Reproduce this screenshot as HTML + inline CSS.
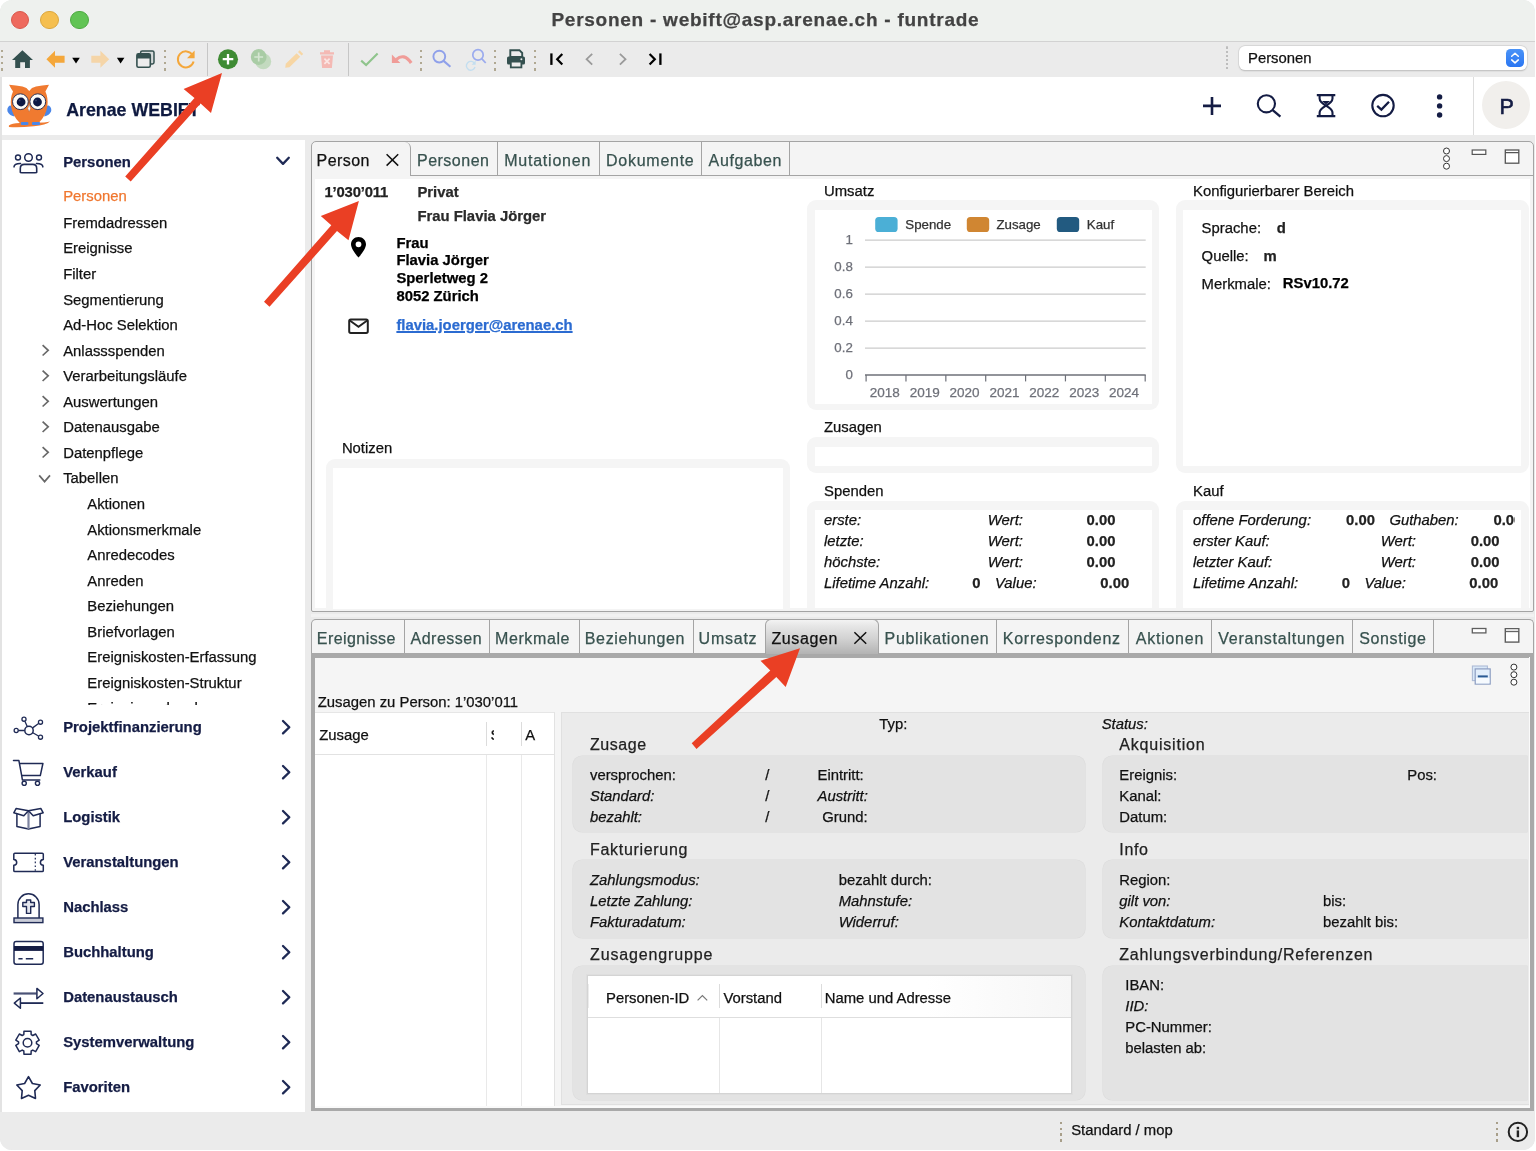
<!DOCTYPE html>
<html><head><meta charset="utf-8"><title>Personen</title><style>
html,body{margin:0;padding:0;background:#fff;}
body{width:1536px;height:1151px;overflow:hidden;position:relative;font-family:"Liberation Sans",sans-serif;color:#111;}
#win{will-change:transform;position:absolute;left:0;top:0;width:1534.8px;height:1150.2px;border-radius:12px;overflow:hidden;background:#ebebeb;}
.b{position:absolute;box-sizing:border-box;}
.t{position:absolute;line-height:1;white-space:nowrap;-webkit-text-stroke:0.25px currentColor;}
</style></head><body><div id="win">
<div class="b" style="left:0px;top:0px;width:1536px;height:41px;background:#eef1ee;"></div>
<div class="b" style="left:0px;top:41px;width:1536px;height:1px;background:#d2d2d2;"></div>
<div class="b" style="left:10.5px;top:10.8px;width:18.4px;height:18.4px;background:#ee6a5e;border-radius:50%;border:0.5px solid #d9584c;"></div>
<div class="b" style="left:40.3px;top:10.8px;width:18.4px;height:18.4px;background:#f5bf4f;border-radius:50%;border:0.5px solid #dba73e;"></div>
<div class="b" style="left:70.2px;top:10.8px;width:18.4px;height:18.4px;background:#61c454;border-radius:50%;border:0.5px solid #4faa43;"></div>
<div class="t" style="top:10.00px;font-size:19px;left:551.40px;font-weight:700;color:#434343;letter-spacing:0.75px;">Personen - webift@asp.arenae.ch - funtrade</div>
<div class="b" style="left:0px;top:42px;width:1536px;height:35px;background:#ebebeb;"></div>
<div class="b" style="left:0px;top:77px;width:1536px;height:57.5px;background:#ffffff;"></div>
<div class="b" style="left:0px;top:134.5px;width:1536px;height:1016.5px;background:#ebebeb;"></div>
<div class="b" style="left:0px;top:77px;width:1.6px;height:1035px;background:#e3e3e3;"></div>
<div class="b" style="left:1060px;top:1121.6px;width:2.2px;height:2.4px;background:#a89f8a;"></div>
<div class="b" style="left:1495.8px;top:1121.6px;width:2.2px;height:2.4px;background:#a89f8a;"></div>
<div class="b" style="left:1060px;top:1127.53px;width:2.2px;height:2.4px;background:#a89f8a;"></div>
<div class="b" style="left:1495.8px;top:1127.53px;width:2.2px;height:2.4px;background:#a89f8a;"></div>
<div class="b" style="left:1060px;top:1133.4599999999998px;width:2.2px;height:2.4px;background:#a89f8a;"></div>
<div class="b" style="left:1495.8px;top:1133.4599999999998px;width:2.2px;height:2.4px;background:#a89f8a;"></div>
<div class="b" style="left:1060px;top:1139.3899999999999px;width:2.2px;height:2.4px;background:#a89f8a;"></div>
<div class="b" style="left:1495.8px;top:1139.3899999999999px;width:2.2px;height:2.4px;background:#a89f8a;"></div>
<div class="t" style="top:1123.00px;font-size:14.85px;left:1071.20px;">Standard / mop</div>
<svg class="b" style="left:1506px;top:1119.5px;" width="24" height="24" viewBox="0 0 24 24"><circle cx="11.9" cy="11.9" r="9.2" fill="none" stroke="#222" stroke-width="2"/><rect x="10.7" y="10.4" width="2.4" height="6.8" fill="#222"/><rect x="10.7" y="6.8" width="2.4" height="2.4" fill="#222"/></svg>
<div class="b" style="left:1.4px;top:49.8px;width:2px;height:2.3px;background:#b0a892;"></div>
<div class="b" style="left:1.4px;top:55.949999999999996px;width:2px;height:2.3px;background:#b0a892;"></div>
<div class="b" style="left:1.4px;top:62.099999999999994px;width:2px;height:2.3px;background:#b0a892;"></div>
<div class="b" style="left:1.4px;top:68.25px;width:2px;height:2.3px;background:#b0a892;"></div>
<div class="b" style="left:164px;top:49.8px;width:2px;height:2.3px;background:#b0a892;"></div>
<div class="b" style="left:164px;top:55.949999999999996px;width:2px;height:2.3px;background:#b0a892;"></div>
<div class="b" style="left:164px;top:62.099999999999994px;width:2px;height:2.3px;background:#b0a892;"></div>
<div class="b" style="left:164px;top:68.25px;width:2px;height:2.3px;background:#b0a892;"></div>
<div class="b" style="left:420.4px;top:49.8px;width:2px;height:2.3px;background:#b0a892;"></div>
<div class="b" style="left:420.4px;top:55.949999999999996px;width:2px;height:2.3px;background:#b0a892;"></div>
<div class="b" style="left:420.4px;top:62.099999999999994px;width:2px;height:2.3px;background:#b0a892;"></div>
<div class="b" style="left:420.4px;top:68.25px;width:2px;height:2.3px;background:#b0a892;"></div>
<div class="b" style="left:494px;top:49.8px;width:2px;height:2.3px;background:#b0a892;"></div>
<div class="b" style="left:494px;top:55.949999999999996px;width:2px;height:2.3px;background:#b0a892;"></div>
<div class="b" style="left:494px;top:62.099999999999994px;width:2px;height:2.3px;background:#b0a892;"></div>
<div class="b" style="left:494px;top:68.25px;width:2px;height:2.3px;background:#b0a892;"></div>
<div class="b" style="left:534.4px;top:49.8px;width:2px;height:2.3px;background:#b0a892;"></div>
<div class="b" style="left:534.4px;top:55.949999999999996px;width:2px;height:2.3px;background:#b0a892;"></div>
<div class="b" style="left:534.4px;top:62.099999999999994px;width:2px;height:2.3px;background:#b0a892;"></div>
<div class="b" style="left:534.4px;top:68.25px;width:2px;height:2.3px;background:#b0a892;"></div>
<div class="b" style="left:1226px;top:46px;width:2px;height:2px;background:#c9c9c9;"></div>
<div class="b" style="left:1226.3px;top:46.5px;width:1.6px;height:2px;background:#bdbdbd;"></div>
<div class="b" style="left:1226.3px;top:50.6px;width:1.6px;height:2px;background:#bdbdbd;"></div>
<div class="b" style="left:1226.3px;top:54.7px;width:1.6px;height:2px;background:#bdbdbd;"></div>
<div class="b" style="left:1226.3px;top:58.8px;width:1.6px;height:2px;background:#bdbdbd;"></div>
<div class="b" style="left:1226.3px;top:62.9px;width:1.6px;height:2px;background:#bdbdbd;"></div>
<div class="b" style="left:1226.3px;top:67.0px;width:1.6px;height:2px;background:#bdbdbd;"></div>
<div class="b" style="left:207.2px;top:43px;width:1px;height:33px;background:#c6c6c6;"></div>
<div class="b" style="left:348px;top:43px;width:1px;height:33px;background:#c6c6c6;"></div>
<svg class="b" style="left:0px;top:0px;" width="700" height="80" viewBox="0 0 700 80"><path d="M22.4 50.2 L33 59.9 L29.9 59.9 L29.9 68 L25 68 L25 62.2 L20.2 62.2 L20.2 68 L15.2 68 L15.2 59.9 L12 59.9 Z" fill="#34504f"/><path d="M46.4 59.2 L55 50.7 L55 55.8 L64.6 55.8 L64.6 62.7 L55 62.7 L55 67.7 Z" fill="#f4a73b"/><path d="M72.2 57.8 L79.8 57.8 L76 63.4 Z" fill="#000"/><path d="M109.2 59.2 L100.4 50.7 L100.4 55.8 L91.3 55.8 L91.3 62.7 L100.4 62.7 L100.4 67.7 Z" fill="#f5d5a8"/><path d="M116.9 57.8 L124.4 57.8 L120.6 63.4 Z" fill="#000"/><rect x="140.6" y="50.9" width="13.4" height="13" rx="1.6" fill="#d5dada" stroke="#34504f" stroke-width="1.5"/><rect x="136.9" y="53.9" width="13.4" height="13.4" rx="1.6" fill="#ececec" stroke="#34504f" stroke-width="1.6"/><rect x="136.9" y="53.9" width="13.4" height="4.6" fill="#34504f"/><path d="M192.6 55 A8 8 0 1 0 193.6 61.5" fill="none" stroke="#f4a73b" stroke-width="2"/><path d="M194.6 50.4 L194.6 58.2 L187 58.2 Z" fill="#f4a73b"/><circle cx="228" cy="59.2" r="10" fill="#3f8b34"/><path d="M228 53.9 V64.5 M222.7 59.2 H233.3" stroke="#fff" stroke-width="2.3"/><circle cx="263.3" cy="61.4" r="7.9" fill="#c3dabf"/><circle cx="258.7" cy="57" r="7.9" fill="#a9cca5"/><path d="M258.7 52.6 V61.4 M254.3 57 H263.1" stroke="#d5e6d2" stroke-width="1.7"/><path d="M285.2 67.8 L285.8 63.7 L296.6 53.2 L300.2 56.8 L289.4 67.3 Z" fill="#f7d6a4"/><path d="M298 51.9 L299.6 50.3 L303.2 53.9 L301.6 55.5 Z" fill="#f7d6a4"/><path d="M320 52.2 H334 V54.4 H320 Z M324 50.2 H330 V52.2 H324 Z M321 55.6 H333 L331.9 68 H322.1 Z" fill="#f4b9b4"/><path d="M324.4 58.6 L329.6 63.8 M329.6 58.6 L324.4 63.8" stroke="#fbe6e4" stroke-width="1.7"/><path d="M361.2 60.6 L366.1 65 L377.6 53.4" fill="none" stroke="#8fc48c" stroke-width="2.1"/><path d="M391.9 54.4 L391.9 63 L400.4 63 Z" fill="#f09c98"/><path d="M396.2 59.6 Q404 52.5 411.2 63" fill="none" stroke="#f09c98" stroke-width="3.2"/><circle cx="439.3" cy="56.6" r="5.9" fill="none" stroke="#8fa0ea" stroke-width="1.9"/><path d="M443.6 60.9 L450.4 66.8" stroke="#8fa0ea" stroke-width="2.1"/><circle cx="478" cy="54.9" r="5.2" fill="none" stroke="#9babee" stroke-width="1.7"/><path d="M481.7 58.7 L485.7 63" stroke="#9babee" stroke-width="1.8"/><path d="M474.6 63.6 A4.4 4.4 0 1 0 475 67" fill="none" stroke="#c3def0" stroke-width="1.4"/><path d="M475.6 60.6 L475.6 64.8 L471.6 64.8 Z" fill="#c3def0"/><path d="M510.3 50.2 H519.4 L522.2 53 V57 H510.3 Z" fill="none" stroke="#34504f" stroke-width="1.9"/><rect x="507" y="56.6" width="18" height="8" rx="1.6" fill="#34504f"/><rect x="510.8" y="61.6" width="10.6" height="5.8" fill="#ececec" stroke="#34504f" stroke-width="1.8"/><circle cx="521.4" cy="59.2" r="1" fill="#ececec"/><path d="M551.4 53.4 V64.9" stroke="#000" stroke-width="2.3"/><path d="M562.3 53.9 L557.2 59.2 L562.3 64.5" fill="none" stroke="#000" stroke-width="2.2"/><path d="M592.2 53.8 L586.6 59.2 L592.2 64.6" fill="none" stroke="#9a9a9a" stroke-width="1.8"/><path d="M619.9 53.8 L625.5 59.2 L619.9 64.6" fill="none" stroke="#9a9a9a" stroke-width="1.8"/><path d="M649.6 53.9 L654.8 59.2 L649.6 64.5" fill="none" stroke="#000" stroke-width="2.2"/><path d="M660.4 53.4 V64.9" stroke="#000" stroke-width="2.3"/></svg>
<div class="b" style="left:1239px;top:45.7px;width:288px;height:24.5px;background:#ffffff;border-radius:6px;box-shadow:0 0 0 0.5px #cfcfcf,0 0.5px 1.5px rgba(0,0,0,0.25);"></div>
<div class="t" style="top:51.00px;font-size:14.85px;left:1248.00px;">Personen</div>
<div class="b" style="left:1506px;top:48.7px;width:18px;height:18.2px;border-radius:4.6px;background:linear-gradient(#4a93f7,#2b76f2);"></div>
<svg class="b" style="left:1506px;top:48.7px;" width="18" height="18.2" viewBox="0 0 18 18.2"><path d="M5.7 7.3 L9 4.3 L12.3 7.3 M5.7 10.9 L9 13.9 L12.3 10.9" fill="none" stroke="#fff" stroke-width="1.5" stroke-linecap="round" stroke-linejoin="round"/></svg>
<svg class="b" style="left:0px;top:78px;" width="60" height="56" viewBox="0 78 60 56"><path d="M8.9 125.6 Q12 122.6 22 123 L44 122.6 Q48 122.2 50 121.6 Q46 125.4 34 126.2 Q18 128 8.9 127 Z" fill="#f07a30"/><path d="M9.8 105.4 Q6.4 108 7.6 111.6 Q9.2 115.6 14.4 116.4 L13.2 106 Z" fill="#4a86e8"/><path d="M48.8 105.4 Q52.2 108 51 111.6 Q49.4 115.6 44.2 116.4 L45.4 106 Z" fill="#4a86e8"/><path d="M9.1 84.8 Q16 85.4 22.5 86.6 Q27 87.6 29.2 91 Q31.4 87.6 36 86.6 Q42 85.4 49 84.8 Q47.2 88.4 45.4 91.4 Q48.4 98 47.4 106 Q46 116 38.6 122.9 L19.8 122.9 Q12.4 116 11 106 Q10 98 13 91.4 Q10.8 88.4 9.1 84.8 Z" fill="#f07a30"/><circle cx="20.4" cy="101.7" r="7.9" fill="#fdfcf9" stroke="#1a2348" stroke-width="0.9"/><circle cx="37.8" cy="101.7" r="7.9" fill="#fdfcf9" stroke="#1a2348" stroke-width="0.9"/><circle cx="21.1" cy="102" r="4.4" fill="#0c1844"/><circle cx="37.5" cy="102" r="4.4" fill="#0c1844"/><circle cx="19.6" cy="100.4" r="0.9" fill="#39456e"/><circle cx="36" cy="100.4" r="0.9" fill="#39456e"/><path d="M29.2 104.6 L30.6 108.6 L29.2 111.6 L27.8 108.6 Z" fill="#fdfcf9" stroke="#8d6a63" stroke-width="0.4"/><rect x="20.8" y="121.9" width="7.6" height="3" rx="1.2" fill="#4a86e8"/><rect x="31.9" y="121.9" width="8.2" height="3" rx="1.2" fill="#4a86e8"/></svg>
<div class="t" style="top:102.00px;font-size:17.8px;left:66.20px;font-weight:700;color:#0f1a40;">Arenae WEBIFT</div>
<svg class="b" style="left:1190px;top:80px;" width="346" height="54" viewBox="1190 80 346 54"><path d="M1212 96.9 V114.9 M1203 105.9 H1221" stroke="#141c44" stroke-width="2.6"/><circle cx="1266.4" cy="103.8" r="8.6" fill="none" stroke="#141c44" stroke-width="2.1"/><path d="M1272.7 110.2 L1280.4 116.6" stroke="#141c44" stroke-width="2.3"/><path d="M1316.8 95.2 H1335.3 M1316.8 116.2 H1335.3" stroke="#141c44" stroke-width="2.3"/><path d="M1319.6 95.6 V98.6 Q1319.6 102 1326 105.7 Q1332.5 102 1332.5 98.6 V95.6 M1319.6 115.8 V112.8 Q1319.6 109.4 1326 105.7 Q1332.5 109.4 1332.5 112.8 V115.8" fill="none" stroke="#141c44" stroke-width="2.1"/><path d="M1322 101 H1330 L1326 104.6 Z" fill="#141c44"/><circle cx="1383" cy="105.6" r="10.7" fill="none" stroke="#141c44" stroke-width="2.1"/><path d="M1377.2 105.8 L1381.4 109.6 L1389 101.8" fill="none" stroke="#141c44" stroke-width="2.3"/><circle cx="1439.6" cy="96.9" r="2.7" fill="#141c44"/><circle cx="1439.6" cy="105.9" r="2.7" fill="#141c44"/><circle cx="1439.6" cy="115" r="2.7" fill="#141c44"/></svg>
<div class="b" style="left:1473px;top:77px;width:1px;height:57.5px;background:#dddddd;"></div>
<div class="b" style="left:1482px;top:81.3px;width:48px;height:48px;background:#f1efec;border-radius:50%;"></div>
<div class="t" style="top:97.00px;font-size:21.5px;left:1499.40px;color:#141c44;-webkit-text-stroke:0.6px #141c44;">P</div>
<div class="b" style="left:1.8px;top:140px;width:302.8px;height:972px;background:#ffffff;"></div>
<svg class="b" style="left:0px;top:140px;" width="305" height="972" viewBox="0 140 305 972"><circle cx="28.5" cy="157.5" r="3.8" fill="none" stroke="#1f2a55" stroke-width="1.5" stroke-linejoin="round" stroke-linecap="round"/><circle cx="18" cy="157.5" r="2.5" fill="none" stroke="#1f2a55" stroke-width="1.4" stroke-linejoin="round" stroke-linecap="round"/><circle cx="39" cy="157.5" r="2.5" fill="none" stroke="#1f2a55" stroke-width="1.4" stroke-linejoin="round" stroke-linecap="round"/><path d="M20.3 172.6 V168.4 Q20.3 164.4 24.3 164.4 H32.7 Q36.7 164.4 36.7 168.4 V172.6 Q36.7 172.8 35 172.8 H22 Q20.3 172.8 20.3 172.6 Z" fill="none" stroke="#1f2a55" stroke-width="1.6" stroke-linejoin="round" stroke-linecap="round"/><path d="M14 166.9 Q14.3 163.4 20.6 163.5 M42.9 166.9 Q42.6 163.4 36.4 163.5" fill="none" stroke="#1f2a55" stroke-width="1.5" stroke-linejoin="round" stroke-linecap="round"/><path d="M277.2 157.8 L283 163.9 L288.8 157.8" fill="none" stroke="#1f2a55" stroke-width="2.3" stroke-linejoin="round" stroke-linecap="round"/><path d="M42.6 345.1 L48.2 350.3 L42.6 355.5" fill="none" stroke="#686868" stroke-width="1.7"/><path d="M42.6 370.6 L48.2 375.8 L42.6 381.0" fill="none" stroke="#686868" stroke-width="1.7"/><path d="M42.6 396.1 L48.2 401.3 L42.6 406.5" fill="none" stroke="#686868" stroke-width="1.7"/><path d="M42.6 421.6 L48.2 426.8 L42.6 432.0" fill="none" stroke="#686868" stroke-width="1.7"/><path d="M42.6 447.1 L48.2 452.3 L42.6 457.5" fill="none" stroke="#686868" stroke-width="1.7"/><path d="M39.2 475.4 L44.6 481.6 L50 475.4" fill="none" stroke="#686868" stroke-width="1.7"/><path d="M283 721.0 L289.3 727.2 L283 733.4000000000001" fill="none" stroke="#1f2a55" stroke-width="2.3" stroke-linejoin="round" stroke-linecap="round"/><path d="M283 766.0 L289.3 772.2 L283 778.4000000000001" fill="none" stroke="#1f2a55" stroke-width="2.3" stroke-linejoin="round" stroke-linecap="round"/><path d="M283 811.0 L289.3 817.2 L283 823.4000000000001" fill="none" stroke="#1f2a55" stroke-width="2.3" stroke-linejoin="round" stroke-linecap="round"/><path d="M283 856.0 L289.3 862.2 L283 868.4000000000001" fill="none" stroke="#1f2a55" stroke-width="2.3" stroke-linejoin="round" stroke-linecap="round"/><path d="M283 901.0 L289.3 907.2 L283 913.4000000000001" fill="none" stroke="#1f2a55" stroke-width="2.3" stroke-linejoin="round" stroke-linecap="round"/><path d="M283 946.0 L289.3 952.2 L283 958.4000000000001" fill="none" stroke="#1f2a55" stroke-width="2.3" stroke-linejoin="round" stroke-linecap="round"/><path d="M283 991.0 L289.3 997.2 L283 1003.4000000000001" fill="none" stroke="#1f2a55" stroke-width="2.3" stroke-linejoin="round" stroke-linecap="round"/><path d="M283 1036.0 L289.3 1042.2 L283 1048.4" fill="none" stroke="#1f2a55" stroke-width="2.3" stroke-linejoin="round" stroke-linecap="round"/><path d="M283 1081.0 L289.3 1087.2 L283 1093.4" fill="none" stroke="#1f2a55" stroke-width="2.3" stroke-linejoin="round" stroke-linecap="round"/><circle cx="29" cy="730.5" r="4.2" fill="none" stroke="#1f2a55" stroke-width="1.5" stroke-linejoin="round" stroke-linecap="round"/><circle cx="24" cy="719.2" r="2.05" fill="none" stroke="#1f2a55" stroke-width="1.3" stroke-linejoin="round" stroke-linecap="round"/><path d="M27.02 726.02 L25.13 721.76" fill="none" stroke="#1f2a55" stroke-width="1.3" stroke-linejoin="round" stroke-linecap="round"/><circle cx="40.5" cy="722.2" r="2.05" fill="none" stroke="#1f2a55" stroke-width="1.3" stroke-linejoin="round" stroke-linecap="round"/><path d="M32.97 727.63 L38.23 723.84" fill="none" stroke="#1f2a55" stroke-width="1.3" stroke-linejoin="round" stroke-linecap="round"/><circle cx="40.5" cy="737.2" r="2.05" fill="none" stroke="#1f2a55" stroke-width="1.3" stroke-linejoin="round" stroke-linecap="round"/><path d="M33.23 732.97 L38.08 735.79" fill="none" stroke="#1f2a55" stroke-width="1.3" stroke-linejoin="round" stroke-linecap="round"/><circle cx="16.2" cy="730.5" r="2.05" fill="none" stroke="#1f2a55" stroke-width="1.3" stroke-linejoin="round" stroke-linecap="round"/><path d="M24.10 730.50 L19.00 730.50" fill="none" stroke="#1f2a55" stroke-width="1.3" stroke-linejoin="round" stroke-linecap="round"/><path d="M13.5 760.6 H18.9 L21.7 775.6 H40.3 L42.9 763.5 H19.6 M21.7 775.6 L22.4 780 H39.8" fill="none" stroke="#1f2a55" stroke-width="1.5" stroke-linejoin="round" stroke-linecap="round"/><circle cx="24.2" cy="783.3" r="2.1" fill="none" stroke="#1f2a55" stroke-width="1.4" stroke-linejoin="round" stroke-linecap="round"/><circle cx="37.5" cy="783.3" r="2.1" fill="none" stroke="#1f2a55" stroke-width="1.4" stroke-linejoin="round" stroke-linecap="round"/><path d="M16.9 814.4 V826.4 L28.5 829 L40.1 826.4 V814.4" fill="none" stroke="#1f2a55" stroke-width="1.5" stroke-linejoin="round" stroke-linecap="round"/><path d="M28.5 810.8 V829" fill="none" stroke="#7d84a0" stroke-width="2.2"/><path d="M28.5 810.8 L16.2 808.4 L13.8 812.8 L23.8 815.8 Z M28.5 810.8 L40.8 808.4 L43.2 812.8 L33.2 815.8 Z" fill="none" stroke="#1f2a55" stroke-width="1.5" stroke-linejoin="round" stroke-linecap="round"/><path d="M14.9 853.2 H42.2 Q43.3 853.2 43.3 854.3 V859.6 Q40.4 859.9 40.4 862.4 Q40.4 864.9 43.3 865.2 V870.4 Q43.3 871.5 42.2 871.5 H14.9 Q13.8 871.5 13.8 870.4 V865.2 Q16.7 864.9 16.7 862.4 Q16.7 859.9 13.8 859.6 V854.3 Q13.8 853.2 14.9 853.2 Z" fill="none" stroke="#1f2a55" stroke-width="1.5" stroke-linejoin="round" stroke-linecap="round"/><path d="M35.3 854 V871" fill="none" stroke="#1f2a55" stroke-width="1.2" stroke-dasharray="1.6 2.2"/><path d="M17.9 917.6 V904.4 A10.6 10.6 0 0 1 39.1 904.4 V917.6" fill="none" stroke="#1f2a55" stroke-width="1.5" stroke-linejoin="round" stroke-linecap="round"/><rect x="14" y="918" width="28.9" height="4.6" fill="#c9ccd8" stroke="#1f2a55" stroke-width="1.4"/><path d="M26.5 900 H30.7 V902.5 H34.4 V906.5 H30.7 V913.4 H26.5 V906.5 H22.8 V902.5 H26.5 Z" fill="#e4e6ee" stroke="#1f2a55" stroke-width="1.4" stroke-linejoin="round"/><rect x="14" y="941.5" width="29.2" height="22.8" rx="2.2" fill="none" stroke="#1f2a55" stroke-width="1.5" stroke-linejoin="round" stroke-linecap="round"/><rect x="14" y="946" width="29.2" height="4.9" fill="#141c44"/><path d="M18.4 958.7 H22.6 M25.8 958.7 H33.2" stroke="#1f2a55" stroke-width="1.6"/><path d="M13.6 993.5 H36.6" stroke="#4a5276" stroke-width="2.2"/><path d="M36.9 988.4 L43 993.5 L36.9 998.8 Z" fill="none" stroke="#1f2a55" stroke-width="1.5" stroke-linejoin="round" stroke-linecap="round"/><path d="M20.6 1003.1 H43.3" stroke="#1f2a55" stroke-width="1.8"/><path d="M20.4 998 L14.3 1003.1 L20.4 1008.3 Z" fill="none" stroke="#1f2a55" stroke-width="1.5" stroke-linejoin="round" stroke-linecap="round"/><path d="M31.17 1034.58 L31.05 1031.34 L23.95 1031.34 L23.83 1034.58 L22.22 1035.51 L19.34 1034.00 L15.80 1040.14 L18.55 1041.87 L18.55 1043.73 L15.80 1045.46 L19.34 1051.60 L22.22 1050.09 L23.83 1051.02 L23.95 1054.26 L31.05 1054.26 L31.17 1051.02 L32.78 1050.09 L35.66 1051.60 L39.20 1045.46 L36.45 1043.73 L36.45 1041.87 L39.20 1040.14 L35.66 1034.00 L32.78 1035.51 Z" fill="none" stroke="#1f2a55" stroke-width="1.5" stroke-linejoin="round" stroke-linecap="round"/><circle cx="27.5" cy="1042.8" r="4.3" fill="none" stroke="#1f2a55" stroke-width="1.5" stroke-linejoin="round" stroke-linecap="round"/><path d="M28.5 1076.6 L32.4 1083.5 L40.2 1085 L34.8 1090.6 L35.5 1098.4 L28.5 1095.2 L21.5 1098.4 L22.2 1090.6 L16.8 1085 L24.6 1083.5 Z" fill="none" stroke="#1f2a55" stroke-width="1.6" stroke-linejoin="round" stroke-linecap="round"/></svg>
<div class="t" style="top:155.00px;font-size:14.85px;left:63.20px;font-weight:700;color:#141c44;">Personen</div>
<div class="t" style="top:189.00px;font-size:14.85px;left:63.20px;color:#f0772f;">Personen</div>
<div class="t" style="top:216.00px;font-size:14.85px;left:63.20px;">Fremdadressen</div>
<div class="t" style="top:241.00px;font-size:14.85px;left:63.20px;">Ereignisse</div>
<div class="t" style="top:267.00px;font-size:14.85px;left:63.20px;">Filter</div>
<div class="t" style="top:293.00px;font-size:14.85px;left:63.20px;">Segmentierung</div>
<div class="t" style="top:318.00px;font-size:14.85px;left:63.20px;">Ad-Hoc Selektion</div>
<div class="t" style="top:344.00px;font-size:14.85px;left:63.20px;">Anlassspenden</div>
<div class="t" style="top:369.00px;font-size:14.85px;left:63.20px;">Verarbeitungsläufe</div>
<div class="t" style="top:395.00px;font-size:14.85px;left:63.20px;">Auswertungen</div>
<div class="t" style="top:420.00px;font-size:14.85px;left:63.20px;">Datenausgabe</div>
<div class="t" style="top:446.00px;font-size:14.85px;left:63.20px;">Datenpflege</div>
<div class="t" style="top:471.00px;font-size:14.85px;left:63.20px;">Tabellen</div>
<div class="t" style="top:497.00px;font-size:14.85px;left:87.30px;">Aktionen</div>
<div class="t" style="top:523.00px;font-size:14.85px;left:87.30px;">Aktionsmerkmale</div>
<div class="t" style="top:548.00px;font-size:14.85px;left:87.30px;">Anredecodes</div>
<div class="t" style="top:574.00px;font-size:14.85px;left:87.30px;">Anreden</div>
<div class="t" style="top:599.00px;font-size:14.85px;left:87.30px;">Beziehungen</div>
<div class="t" style="top:625.00px;font-size:14.85px;left:87.30px;">Briefvorlagen</div>
<div class="t" style="top:650.00px;font-size:14.85px;left:87.30px;">Ereigniskosten-Erfassung</div>
<div class="t" style="top:676.00px;font-size:14.85px;left:87.30px;">Ereigniskosten-Struktur</div>
<div class="b" style="left:60px;top:690px;width:240px;height:15.0px;overflow:hidden;"><div class="t" style="left:27.30px;top:11.00px;font-size:14.85px;">Ereignismerkmale</div></div>
<div class="t" style="top:720.00px;font-size:14.85px;left:63.20px;font-weight:700;color:#141c44;">Projektfinanzierung</div>
<div class="t" style="top:765.00px;font-size:14.85px;left:63.20px;font-weight:700;color:#141c44;">Verkauf</div>
<div class="t" style="top:810.00px;font-size:14.85px;left:63.20px;font-weight:700;color:#141c44;">Logistik</div>
<div class="t" style="top:855.00px;font-size:14.85px;left:63.20px;font-weight:700;color:#141c44;">Veranstaltungen</div>
<div class="t" style="top:900.00px;font-size:14.85px;left:63.20px;font-weight:700;color:#141c44;">Nachlass</div>
<div class="t" style="top:945.00px;font-size:14.85px;left:63.20px;font-weight:700;color:#141c44;">Buchhaltung</div>
<div class="t" style="top:990.00px;font-size:14.85px;left:63.20px;font-weight:700;color:#141c44;">Datenaustausch</div>
<div class="t" style="top:1035.00px;font-size:14.85px;left:63.20px;font-weight:700;color:#141c44;">Systemverwaltung</div>
<div class="t" style="top:1080.00px;font-size:14.85px;left:63.20px;font-weight:700;color:#141c44;">Favoriten</div>
<div class="b" style="left:311px;top:140.5px;width:1222.8px;height:471.8px;background:#f4f4f4;border:1px solid #a4a4a4;border-radius:5px 5px 2px 2px;"></div>
<div class="b" style="left:314.8px;top:178.7px;width:1215.2px;height:429.8px;background:#ffffff;"></div>
<div class="b" style="left:410px;top:175px;width:1123px;height:1px;background:#a4a4a4;"></div>
<div class="b" style="left:404px;top:141.5px;width:7px;height:34.4px;background:#f4f4f4;border-right:1px solid #a4a4a4;border-top-right-radius:6px;"></div>
<div class="b" style="left:496.9px;top:141.5px;width:1px;height:33.6px;background:#a4a4a4;"></div>
<div class="b" style="left:598.9px;top:141.5px;width:1px;height:33.6px;background:#a4a4a4;"></div>
<div class="b" style="left:701.1px;top:141.5px;width:1px;height:33.6px;background:#a4a4a4;"></div>
<div class="b" style="left:789.1px;top:141.5px;width:1px;height:33.6px;background:#a4a4a4;"></div>
<div class="t" style="top:153.00px;font-size:16px;left:316.60px;letter-spacing:0.42px;">Person</div>
<div class="t" style="top:153.00px;font-size:16px;left:417.00px;color:#38524f;letter-spacing:0.49px;">Personen</div>
<div class="t" style="top:153.00px;font-size:16px;left:504.20px;color:#38524f;letter-spacing:0.77px;">Mutationen</div>
<div class="t" style="top:153.00px;font-size:16px;left:606.00px;color:#38524f;letter-spacing:0.74px;">Dokumente</div>
<div class="t" style="top:153.00px;font-size:16px;left:708.60px;color:#38524f;letter-spacing:0.62px;">Aufgaben</div>
<svg class="b" style="left:311px;top:141px;" width="1223" height="36" viewBox="311 141 1223 36"><path d="M386.6 154.2 L398.2 165.6 M398.2 154.2 L386.6 165.6" stroke="#111" stroke-width="1.5"/><circle cx="1446.5" cy="151" r="3" fill="#fff" stroke="#333" stroke-width="1"/><circle cx="1446.5" cy="158.6" r="3" fill="#fff" stroke="#333" stroke-width="1"/><circle cx="1446.5" cy="166.2" r="3" fill="#fff" stroke="#333" stroke-width="1"/><rect x="1472.2" y="150" width="13.6" height="4.4" fill="#fff" stroke="#555" stroke-width="1.2"/><rect x="1505.3" y="150" width="13.5" height="13.2" fill="#fff" stroke="#555" stroke-width="1.3"/><path d="M1505.3 152.6 H1518.8" stroke="#555" stroke-width="1.2"/></svg>
<div class="t" style="top:185.00px;font-size:14.85px;left:324.50px;font-weight:700;color:#222;letter-spacing:-0.17px;">1’030’011</div>
<div class="t" style="top:185.00px;font-size:14.85px;left:417.40px;font-weight:700;color:#2a2a2a;">Privat</div>
<div class="t" style="top:209.00px;font-size:14.85px;left:417.40px;font-weight:700;color:#2a2a2a;">Frau Flavia Jörger</div>
<div class="t" style="top:236.00px;font-size:14.85px;left:396.40px;font-weight:700;color:#000;">Frau</div>
<div class="t" style="top:253.00px;font-size:14.85px;left:396.40px;font-weight:700;color:#000;">Flavia Jörger</div>
<div class="t" style="top:271.00px;font-size:14.85px;left:396.40px;font-weight:700;color:#000;">Sperletweg 2</div>
<div class="t" style="top:289.00px;font-size:14.85px;left:396.40px;font-weight:700;color:#000;">8052 Zürich</div>
<div class="t" style="top:318.00px;font-size:14.85px;left:396.40px;font-weight:700;color:#2b6bd1;text-decoration:underline;text-decoration-thickness:1.6px;text-underline-offset:1px;">flavia.joerger@arenae.ch</div>
<svg class="b" style="left:340px;top:230px;" width="40" height="110" viewBox="340 230 40 110"><path d="M358.5 236.9 C354.2 236.9 351 240.2 351 244.3 C351 249.6 358.5 257.6 358.5 257.6 C358.5 257.6 366 249.6 366 244.3 C366 240.2 362.8 236.9 358.5 236.9 Z M358.5 241.4 A2.9 2.9 0 1 1 358.5 247.2 A2.9 2.9 0 1 1 358.5 241.4 Z" fill="#000" fill-rule="evenodd"/><rect x="349.2" y="319.5" width="18.6" height="13.4" rx="1.6" fill="none" stroke="#222" stroke-width="2"/><path d="M349.8 320.4 L358.5 326.8 L367.2 320.4" fill="none" stroke="#222" stroke-width="1.9"/></svg>
<div class="b" style="left:325.6px;top:458.5px;width:464.8px;height:150.0px;background:#f5f5f5;border-radius:9px 9px 0 0;"></div>
<div class="b" style="left:333.0px;top:468.0px;width:450.0px;height:140.5px;background:#ffffff;"></div>
<div class="t" style="top:441.00px;font-size:14.85px;left:341.90px;">Notizen</div>
<div class="b" style="left:807.2px;top:200.2px;width:352.2px;height:210px;background:#f5f5f5;border-radius:9px;"></div>
<div class="b" style="left:814.6px;top:209.7px;width:337.4px;height:193.9px;background:#ffffff;"></div>
<div class="t" style="top:184.00px;font-size:14.85px;left:824.00px;">Umsatz</div>
<div class="b" style="left:807.2px;top:437.4px;width:352.2px;height:35.4px;background:#f5f5f5;border-radius:9px;"></div>
<div class="b" style="left:814.6px;top:446.9px;width:337.4px;height:19.299999999999997px;background:#ffffff;"></div>
<div class="t" style="top:420.00px;font-size:14.85px;left:824.00px;">Zusagen</div>
<div class="b" style="left:807.2px;top:500.6px;width:352.2px;height:107.89999999999998px;background:#f5f5f5;border-radius:9px 9px 0 0;"></div>
<div class="b" style="left:814.6px;top:510.1px;width:337.4px;height:98.39999999999998px;background:#ffffff;"></div>
<div class="t" style="top:484.00px;font-size:14.85px;left:824.00px;">Spenden</div>
<div class="b" style="left:1176px;top:200.2px;width:352.6px;height:272.6px;background:#f5f5f5;border-radius:9px;"></div>
<div class="b" style="left:1183.4px;top:209.7px;width:337.8px;height:256.5px;background:#ffffff;"></div>
<div class="t" style="top:184.00px;font-size:14.85px;left:1193.00px;">Konfigurierbarer Bereich</div>
<div class="b" style="left:1176px;top:500.6px;width:352.6px;height:107.89999999999998px;background:#f5f5f5;border-radius:9px 9px 0 0;"></div>
<div class="b" style="left:1183.4px;top:510.1px;width:337.8px;height:98.39999999999998px;background:#ffffff;"></div>
<div class="t" style="top:484.00px;font-size:14.85px;left:1193.00px;">Kauf</div>
<svg class="b" style="left:807px;top:200px;" width="353" height="210" viewBox="807 200 353 210"><rect x="875.2" y="217" width="22.4" height="15" rx="3.6" fill="#4bafd6"/><rect x="966.8" y="217" width="22.4" height="15" rx="3.6" fill="#d08632"/><rect x="1056.8" y="217" width="22.4" height="15" rx="3.6" fill="#225a80"/><path d="M865 240 H1145.7" stroke="#cbcbcb" stroke-width="1.25"/><path d="M865 267 H1145.7" stroke="#cbcbcb" stroke-width="1.25"/><path d="M865 294 H1145.7" stroke="#cbcbcb" stroke-width="1.25"/><path d="M865 321 H1145.7" stroke="#cbcbcb" stroke-width="1.25"/><path d="M865 348 H1145.7" stroke="#cbcbcb" stroke-width="1.25"/><path d="M865 375 H1145.7" stroke="#6e7079" stroke-width="1.4"/><path d="M866.10 375 V381.4" stroke="#6e7079" stroke-width="1.2"/><path d="M905.97 375 V381.4" stroke="#6e7079" stroke-width="1.2"/><path d="M945.84 375 V381.4" stroke="#6e7079" stroke-width="1.2"/><path d="M985.71 375 V381.4" stroke="#6e7079" stroke-width="1.2"/><path d="M1025.58 375 V381.4" stroke="#6e7079" stroke-width="1.2"/><path d="M1065.45 375 V381.4" stroke="#6e7079" stroke-width="1.2"/><path d="M1105.32 375 V381.4" stroke="#6e7079" stroke-width="1.2"/><path d="M1145.19 375 V381.4" stroke="#6e7079" stroke-width="1.2"/></svg>
<div class="t" style="top:218.00px;font-size:13.3px;left:905.30px;color:#333;">Spende</div>
<div class="t" style="top:218.00px;font-size:13.3px;left:996.40px;color:#333;">Zusage</div>
<div class="t" style="top:218.00px;font-size:13.3px;left:1086.80px;color:#333;">Kauf</div>
<div class="t" style="top:233.00px;font-size:13.3px;right:682.00px;color:#6e7079;">1</div>
<div class="t" style="top:260.00px;font-size:13.3px;right:682.00px;color:#6e7079;">0.8</div>
<div class="t" style="top:287.00px;font-size:13.3px;right:682.00px;color:#6e7079;">0.6</div>
<div class="t" style="top:314.00px;font-size:13.3px;right:682.00px;color:#6e7079;">0.4</div>
<div class="t" style="top:341.00px;font-size:13.3px;right:682.00px;color:#6e7079;">0.2</div>
<div class="t" style="top:368.00px;font-size:13.3px;right:682.00px;color:#6e7079;">0</div>
<div class="t" style="top:386.00px;font-size:13.5px;left:869.83px;color:#6e7079;">2018</div>
<div class="t" style="top:386.00px;font-size:13.5px;left:909.70px;color:#6e7079;">2019</div>
<div class="t" style="top:386.00px;font-size:13.5px;left:949.57px;color:#6e7079;">2020</div>
<div class="t" style="top:386.00px;font-size:13.5px;left:989.44px;color:#6e7079;">2021</div>
<div class="t" style="top:386.00px;font-size:13.5px;left:1029.31px;color:#6e7079;">2022</div>
<div class="t" style="top:386.00px;font-size:13.5px;left:1069.18px;color:#6e7079;">2023</div>
<div class="t" style="top:386.00px;font-size:13.5px;left:1109.05px;color:#6e7079;">2024</div>
<div class="t" style="top:221.00px;font-size:14.85px;left:1201.60px;">Sprache:</div>
<div class="t" style="top:221.00px;font-size:14.85px;left:1276.80px;font-weight:700;color:#222;">d</div>
<div class="t" style="top:249.00px;font-size:14.85px;left:1201.60px;">Quelle:</div>
<div class="t" style="top:249.00px;font-size:14.85px;left:1263.60px;font-weight:700;color:#222;">m</div>
<div class="t" style="top:277.00px;font-size:14.85px;left:1201.60px;">Merkmale:</div>
<div class="t" style="top:276.00px;font-size:14.85px;left:1282.80px;font-weight:700;color:#000;">RSv10.72</div>
<div class="t" style="top:513.00px;font-size:14.85px;left:824.00px;font-style:italic;">erste:</div>
<div class="t" style="top:534.00px;font-size:14.85px;left:824.00px;font-style:italic;">letzte:</div>
<div class="t" style="top:555.00px;font-size:14.85px;left:824.00px;font-style:italic;">höchste:</div>
<div class="t" style="top:576.00px;font-size:14.85px;left:824.00px;font-style:italic;">Lifetime Anzahl:</div>
<div class="t" style="top:513.00px;font-size:14.85px;left:987.80px;font-style:italic;">Wert:</div>
<div class="t" style="top:513.00px;font-size:14.85px;right:419.40px;font-weight:700;color:#222;">0.00</div>
<div class="t" style="top:534.00px;font-size:14.85px;left:987.80px;font-style:italic;">Wert:</div>
<div class="t" style="top:534.00px;font-size:14.85px;right:419.40px;font-weight:700;color:#222;">0.00</div>
<div class="t" style="top:555.00px;font-size:14.85px;left:987.80px;font-style:italic;">Wert:</div>
<div class="t" style="top:555.00px;font-size:14.85px;right:419.40px;font-weight:700;color:#222;">0.00</div>
<div class="t" style="top:576.00px;font-size:14.85px;right:554.20px;font-weight:700;color:#222;">0</div>
<div class="t" style="top:576.00px;font-size:14.85px;left:995.00px;font-style:italic;">Value:</div>
<div class="t" style="top:576.00px;font-size:14.85px;right:405.60px;font-weight:700;color:#222;">0.00</div>
<div class="t" style="top:513.00px;font-size:14.85px;left:1193.00px;font-style:italic;">offene Forderung:</div>
<div class="t" style="top:534.00px;font-size:14.85px;left:1193.00px;font-style:italic;">erster Kauf:</div>
<div class="t" style="top:555.00px;font-size:14.85px;left:1193.00px;font-style:italic;">letzter Kauf:</div>
<div class="t" style="top:576.00px;font-size:14.85px;left:1193.00px;font-style:italic;">Lifetime Anzahl:</div>
<div class="t" style="top:513.00px;font-size:14.85px;right:159.80px;font-weight:700;color:#222;">0.00</div>
<div class="t" style="top:513.00px;font-size:14.85px;left:1389.40px;font-style:italic;">Guthaben:</div>
<div class="b" style="left:1480px;top:510px;width:35.2px;height:24px;overflow:hidden;"><div class="t" style="left:13.40px;top:3.00px;font-size:14.85px;font-weight:700;color:#222;">0.00</div></div>
<div class="t" style="top:534.00px;font-size:14.85px;left:1380.70px;font-style:italic;">Wert:</div>
<div class="t" style="top:534.00px;font-size:14.85px;right:35.20px;font-weight:700;color:#222;">0.00</div>
<div class="t" style="top:555.00px;font-size:14.85px;left:1380.70px;font-style:italic;">Wert:</div>
<div class="t" style="top:555.00px;font-size:14.85px;right:35.20px;font-weight:700;color:#222;">0.00</div>
<div class="t" style="top:576.00px;font-size:14.85px;right:184.80px;font-weight:700;color:#222;">0</div>
<div class="t" style="top:576.00px;font-size:14.85px;left:1364.40px;font-style:italic;">Value:</div>
<div class="t" style="top:576.00px;font-size:14.85px;right:36.60px;font-weight:700;color:#222;">0.00</div>
<div class="b" style="left:311px;top:614.4px;width:1223px;height:2.8px;background:#f2f2f2;"></div>
<div class="b" style="left:311px;top:619px;width:1223.2px;height:492.4px;background:#f4f4f4;border:1px solid #a4a4a4;border-bottom:none;border-radius:5px 5px 0 0;"></div>
<div class="b" style="left:311px;top:653px;width:1223.2px;height:458.4px;background:#a9a9a9;"></div>
<div class="b" style="left:315px;top:657.8px;width:1215.3px;height:450px;background:#f5f5f5;"></div>
<div class="b" style="left:315px;top:1106.2px;width:1215.3px;height:1.6px;background:#fafafa;"></div>
<div class="b" style="left:1528.6px;top:657.4px;width:1.7px;height:450.4px;background:#fafafa;"></div>
<div class="b" style="left:403.7px;top:620px;width:1px;height:33px;background:#a4a4a4;"></div>
<div class="t" style="top:631.00px;font-size:16px;left:316.80px;color:#38524f;letter-spacing:0.44px;">Ereignisse</div>
<div class="b" style="left:489.1px;top:620px;width:1px;height:33px;background:#a4a4a4;"></div>
<div class="t" style="top:631.00px;font-size:16px;left:410.60px;color:#38524f;letter-spacing:0.48px;">Adressen</div>
<div class="b" style="left:579.3px;top:620px;width:1px;height:33px;background:#a4a4a4;"></div>
<div class="t" style="top:631.00px;font-size:16px;left:495.00px;color:#38524f;letter-spacing:0.6px;">Merkmale</div>
<div class="b" style="left:693.3px;top:620px;width:1px;height:33px;background:#a4a4a4;"></div>
<div class="t" style="top:631.00px;font-size:16px;left:584.80px;color:#38524f;letter-spacing:0.63px;">Beziehungen</div>
<div class="t" style="top:631.00px;font-size:16px;left:698.60px;color:#38524f;letter-spacing:0.76px;">Umsatz</div>
<div class="b" style="left:765.1px;top:619px;width:113.79999999999995px;height:34.6px;background:linear-gradient(#f3f3f3 0%,#e6e6e6 18%,#d2d2d2 55%,#b3b3b3 100%);border:1px solid #a4a4a4;border-bottom:none;border-radius:6px 6px 0 0;"></div>
<div class="t" style="top:631.00px;font-size:16px;left:771.40px;letter-spacing:0.62px;">Zusagen</div>
<div class="b" style="left:996.0px;top:620px;width:1px;height:33px;background:#a4a4a4;"></div>
<div class="t" style="top:631.00px;font-size:16px;left:884.60px;color:#38524f;letter-spacing:0.66px;">Publikationen</div>
<div class="b" style="left:1128.2px;top:620px;width:1px;height:33px;background:#a4a4a4;"></div>
<div class="t" style="top:631.00px;font-size:16px;left:1002.80px;color:#38524f;letter-spacing:0.73px;">Korrespondenz</div>
<div class="b" style="left:1210.7px;top:620px;width:1px;height:33px;background:#a4a4a4;"></div>
<div class="t" style="top:631.00px;font-size:16px;left:1135.80px;color:#38524f;letter-spacing:0.75px;">Aktionen</div>
<div class="b" style="left:1352.0px;top:620px;width:1px;height:33px;background:#a4a4a4;"></div>
<div class="t" style="top:631.00px;font-size:16px;left:1218.30px;color:#38524f;letter-spacing:0.75px;">Veranstaltungen</div>
<div class="b" style="left:1432.9px;top:620px;width:1px;height:33px;background:#a4a4a4;"></div>
<div class="t" style="top:631.00px;font-size:16px;left:1359.20px;color:#38524f;letter-spacing:0.62px;">Sonstige</div>
<svg class="b" style="left:311px;top:619px;" width="1223" height="70" viewBox="311 619 1223 70"><path d="M854.4 632.2 L866.2 643.8 M866.2 632.2 L854.4 643.8" stroke="#111" stroke-width="1.5"/><rect x="1472.3" y="628.5" width="13.6" height="4.4" fill="#fff" stroke="#5e5e5e" stroke-width="1.3"/><rect x="1505.3" y="628.7" width="13.5" height="13.4" fill="#fff" stroke="#5e5e5e" stroke-width="1.4"/><rect x="1506" y="629.4" width="12.1" height="1.8" fill="#e6e6e6"/><path d="M1505.3 631.6 H1518.8" stroke="#5e5e5e" stroke-width="1.1"/><rect x="1472.4" y="666" width="15" height="14.6" fill="#d9e8f8" stroke="#aebbd6" stroke-width="1.1"/><rect x="1475.2" y="668.9" width="15" height="15.2" fill="#e2eefb" stroke="#8e9ec2" stroke-width="1.2"/><rect x="1476" y="678" width="13.4" height="5.4" fill="#f6fafe"/><path d="M1477.8 676.4 H1487.8" stroke="#2a5a94" stroke-width="2"/><circle cx="1513.9" cy="667.1" r="3" fill="#fff" stroke="#333" stroke-width="1"/><circle cx="1513.9" cy="674.7" r="3" fill="#fff" stroke="#333" stroke-width="1"/><circle cx="1513.9" cy="682.2" r="3" fill="#fff" stroke="#333" stroke-width="1"/></svg>
<div class="t" style="top:695.00px;font-size:14.85px;left:317.80px;">Zusagen zu Person: 1’030’011</div>
<div class="b" style="left:315px;top:712.4px;width:240.4px;height:394px;background:#ffffff;border-top:1px solid #e6e6e6;border-right:1px solid #e2e2e2;"></div>
<div class="b" style="left:315px;top:753.8px;width:239.4px;height:1px;background:#e2e2e2;"></div>
<div class="b" style="left:485.9px;top:722.4px;width:1px;height:23.4px;background:#dcdcdc;"></div>
<div class="b" style="left:485.9px;top:754.8px;width:1px;height:351.6px;background:#e9e9e9;"></div>
<div class="b" style="left:520.9px;top:722.4px;width:1px;height:23.4px;background:#dcdcdc;"></div>
<div class="b" style="left:520.9px;top:754.8px;width:1px;height:351.6px;background:#e9e9e9;"></div>
<div class="t" style="top:728.00px;font-size:14.85px;left:319.20px;">Zusage</div>
<div class="b" style="left:489px;top:725px;width:4.9px;height:22px;overflow:hidden;"><div class="t" style="left:1.50px;top:3.00px;font-size:14.85px;">S</div></div>
<div class="t" style="top:728.00px;font-size:14.85px;left:525.30px;">A</div>
<div class="b" style="left:561px;top:712.4px;width:967.6px;height:393px;background:#ebebeb;border:1px solid #e0e0e0;border-right:none;"></div>
<div class="t" style="top:737.00px;font-size:16px;left:590.00px;color:#222;letter-spacing:0.54px;">Zusage</div>
<div class="t" style="top:842.00px;font-size:16px;left:590.00px;color:#222;letter-spacing:0.69px;">Fakturierung</div>
<div class="t" style="top:947.00px;font-size:16px;left:590.00px;color:#222;letter-spacing:0.86px;">Zusagengruppe</div>
<div class="t" style="top:737.00px;font-size:16px;left:1119.30px;color:#222;letter-spacing:0.8px;">Akquisition</div>
<div class="t" style="top:842.00px;font-size:16px;left:1119.30px;color:#222;letter-spacing:0.65px;">Info</div>
<div class="t" style="top:947.00px;font-size:16px;left:1119.30px;color:#222;letter-spacing:0.75px;">Zahlungsverbindung/Referenzen</div>
<div class="t" style="top:717.00px;font-size:14.85px;left:879.30px;">Typ:</div>
<div class="t" style="top:717.00px;font-size:14.85px;left:1101.70px;font-style:italic;">Status:</div>
<div class="b" style="left:573.4px;top:756.2px;width:512px;height:75.8px;background:#e3e3e3;border-radius:9px;box-shadow:0 0 0 0.6px #dcdcdc;"></div>
<div class="b" style="left:573.4px;top:860.4px;width:512px;height:77.6px;background:#e3e3e3;border-radius:9px;box-shadow:0 0 0 0.6px #dcdcdc;"></div>
<div class="b" style="left:573.4px;top:966px;width:512px;height:133.6px;background:#e3e3e3;border-radius:9px;box-shadow:0 0 0 0.6px #dcdcdc;"></div>
<div class="b" style="left:1102.6px;top:756.2px;width:424.4px;height:75.8px;background:#e3e3e3;border-radius:9px 0 0 9px;box-shadow:0 0 0 0.6px #dcdcdc;"></div>
<div class="b" style="left:1102.6px;top:860.4px;width:424.4px;height:77.6px;background:#e3e3e3;border-radius:9px 0 0 9px;box-shadow:0 0 0 0.6px #dcdcdc;"></div>
<div class="b" style="left:1102.6px;top:966px;width:424.4px;height:133.6px;background:#e3e3e3;border-radius:9px 0 0 9px;box-shadow:0 0 0 0.6px #dcdcdc;"></div>
<div class="t" style="top:768.00px;font-size:14.85px;left:590.00px;">versprochen:</div>
<div class="t" style="top:789.00px;font-size:14.85px;left:590.00px;font-style:italic;">Standard:</div>
<div class="t" style="top:810.00px;font-size:14.85px;left:590.00px;font-style:italic;">bezahlt:</div>
<div class="t" style="top:768.00px;font-size:14.85px;left:765.30px;">/</div>
<div class="t" style="top:789.00px;font-size:14.85px;left:765.30px;">/</div>
<div class="t" style="top:810.00px;font-size:14.85px;left:765.30px;">/</div>
<div class="t" style="top:768.00px;font-size:14.85px;left:817.50px;">Eintritt:</div>
<div class="t" style="top:789.00px;font-size:14.85px;left:817.50px;font-style:italic;">Austritt:</div>
<div class="t" style="top:810.00px;font-size:14.85px;left:822.30px;">Grund:</div>
<div class="t" style="top:768.00px;font-size:14.85px;left:1119.30px;">Ereignis:</div>
<div class="t" style="top:789.00px;font-size:14.85px;left:1119.30px;">Kanal:</div>
<div class="t" style="top:810.00px;font-size:14.85px;left:1119.30px;">Datum:</div>
<div class="t" style="top:768.00px;font-size:14.85px;left:1407.30px;">Pos:</div>
<div class="t" style="top:873.00px;font-size:14.85px;left:590.00px;font-style:italic;">Zahlungsmodus:</div>
<div class="t" style="top:894.00px;font-size:14.85px;left:590.00px;font-style:italic;">Letzte Zahlung:</div>
<div class="t" style="top:915.00px;font-size:14.85px;left:590.00px;font-style:italic;">Fakturadatum:</div>
<div class="t" style="top:873.00px;font-size:14.85px;left:838.70px;">bezahlt durch:</div>
<div class="t" style="top:894.00px;font-size:14.85px;left:838.70px;font-style:italic;">Mahnstufe:</div>
<div class="t" style="top:915.00px;font-size:14.85px;left:838.70px;font-style:italic;">Widerruf:</div>
<div class="t" style="top:873.00px;font-size:14.85px;left:1119.30px;">Region:</div>
<div class="t" style="top:894.00px;font-size:14.85px;left:1119.30px;font-style:italic;">gilt von:</div>
<div class="t" style="top:915.00px;font-size:14.85px;left:1119.30px;font-style:italic;">Kontaktdatum:</div>
<div class="t" style="top:894.00px;font-size:14.85px;left:1323.00px;">bis:</div>
<div class="t" style="top:915.00px;font-size:14.85px;left:1323.00px;">bezahlt bis:</div>
<div class="t" style="top:978.00px;font-size:14.85px;left:1125.30px;">IBAN:</div>
<div class="t" style="top:999.00px;font-size:14.85px;left:1125.30px;font-style:italic;">IID:</div>
<div class="t" style="top:1020.00px;font-size:14.85px;left:1125.30px;">PC-Nummer:</div>
<div class="t" style="top:1041.00px;font-size:14.85px;left:1125.30px;">belasten ab:</div>
<div class="b" style="left:587px;top:974.6px;width:485px;height:119.4px;background:#ffffff;border:1px solid #d4d4d4;box-shadow:0 0 0 1px #dedede;"></div>
<div class="b" style="left:588px;top:975.6px;width:483px;height:41px;background:linear-gradient(90deg,#ffffff 0%,#ffffff 70%,#f6f6f6 100%);"></div>
<div class="b" style="left:588px;top:1016.6px;width:483px;height:1px;background:#dedede;"></div>
<div class="b" style="left:718.9px;top:983.6px;width:1px;height:24px;background:#dcdcdc;"></div>
<div class="b" style="left:718.9px;top:1017.6px;width:1px;height:75.4px;background:#e6e6e6;"></div>
<div class="b" style="left:821.0px;top:983.6px;width:1px;height:24px;background:#dcdcdc;"></div>
<div class="b" style="left:821.0px;top:1017.6px;width:1px;height:75.4px;background:#e6e6e6;"></div>
<div class="b" style="left:588.4px;top:983.6px;width:1px;height:24px;background:#ececec;"></div>
<div class="t" style="top:991.00px;font-size:14.85px;left:606.00px;">Personen-ID</div>
<div class="t" style="top:991.00px;font-size:14.85px;left:723.40px;">Vorstand</div>
<div class="t" style="top:991.00px;font-size:14.85px;left:824.70px;">Name und Adresse</div>
<svg class="b" style="left:695px;top:992px;" width="16" height="12" viewBox="0 0 16 12"><path d="M2.6 8.4 L7.4 3.6 L12.2 8.4" fill="none" stroke="#777" stroke-width="1.2"/></svg>
<svg class="b" style="left:0px;top:0px;pointer-events:none;" width="1536" height="1151" viewBox="0 0 1536 1151"><path d="M222 72.9 L183.6 88.9 L194.5 98 L125.2 176.5 L130.7 181.4 L200.6 103.5 L211 113 Z" fill="#ea3f24"/><path d="M358.9 200.9 L320.8 215.9 L331.3 225.3 L264 301.7 L269.5 306.8 L337 231.1 L348.5 240.2 Z" fill="#ea3f24"/><path d="M800 648.2 L760.5 660.8 L770.3 670.4 L691.7 743.2 L696.5 749 L776.3 677 L785.7 687 Z" fill="#ea3f24"/></svg>
</div></body></html>
